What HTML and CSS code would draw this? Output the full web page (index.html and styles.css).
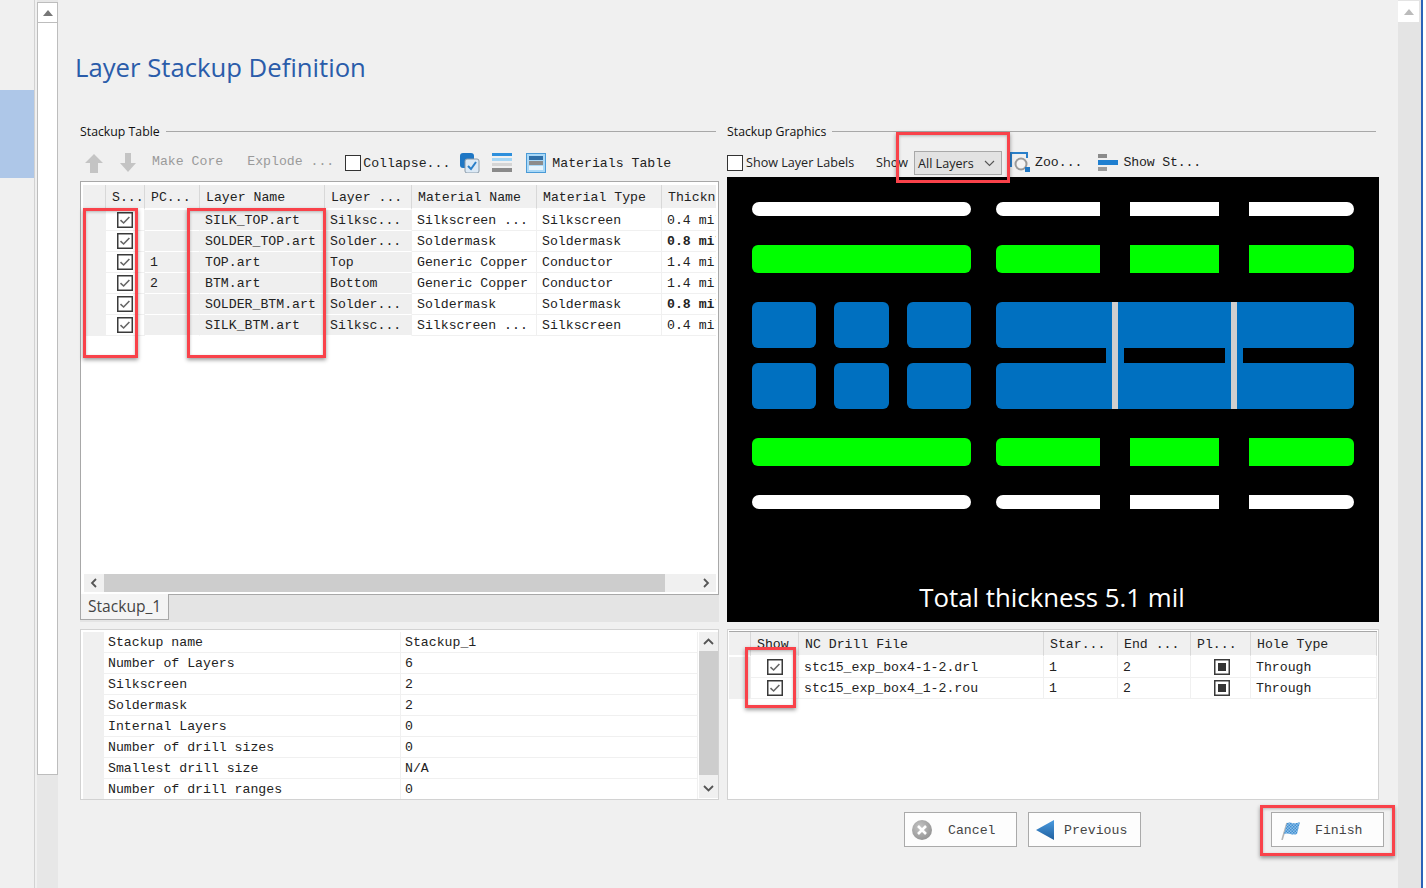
FILE: index.html
```html
<!DOCTYPE html>
<html lang="en">
<head>
    <meta charset="UTF-8" />
    <title>Layer Stackup Definition</title>
    <link rel="stylesheet" href="styles.css">
</head>
<body>
    <svg class="defs" width="0" height="0">
        <defs>
            <pattern id="flag-check" width="3" height="3" patternUnits="userSpaceOnUse">
                <rect width="3" height="3" fill="#8fc0e8"/>
                <rect width="1.5" height="1.5" fill="#3f8fd2"/>
                <rect x="1.5" y="1.5" width="1.5" height="1.5" fill="#3f8fd2"/>
            </pattern>
            <linearGradient id="prev-fill" x1="0" y1="0" x2="0" y2="1">
                <stop offset="0" stop-color="#4a9be0"/>
                <stop offset="1" stop-color="#1f5f9e"/>
            </linearGradient>
            <radialGradient id="cancel-fill" cx="0.4" cy="0.35" r="0.8">
                <stop offset="0" stop-color="#c4c4c4"/>
                <stop offset="1" stop-color="#8c8c8c"/>
            </radialGradient>
        </defs>
        <symbol id="tick" viewBox="0 0 16 16">
            <rect x="0.75" y="0.75" width="14.5" height="14.5" fill="#fff" stroke="#3a3a3a" stroke-width="1.5"/>
            <path d="M3.5 8.2 L6.6 11 L12.4 5" fill="none" stroke="#666" stroke-width="1.6"/>
        </symbol>
        <symbol id="plated" viewBox="0 0 16 16">
            <rect x="0.75" y="0.75" width="14.5" height="14.5" fill="#fff" stroke="#3a3a3a" stroke-width="1.5"/>
            <rect x="4" y="4" width="8" height="8" fill="#333"/>
        </symbol>
    </svg>

    <div class="sidebar"><div class="sidebar-active"></div></div>

    <div class="vscroll vscroll-left">
        <div class="vscroll-btn"><span class="tri-up"></span></div>
        <div class="vscroll-thumb"></div>
    </div>

    <div class="content">
        <h1 class="title">Layer Stackup Definition</h1>

        <div class="top-row">
            <!-- Stackup table -->
            <div class="panel">
                <div class="group-label"><span>Stackup Table</span></div>
                <div class="toolbar toolbar-left">
                    <svg class="arrow-icon" width="20" height="22" viewBox="0 0 20 22"><path d="M10 2 L19 11 H14 V21 H6 V11 H1 Z" fill="#c4c4c4"/></svg>
                    <svg class="arrow-icon arrow-down" width="18" height="22" viewBox="0 0 18 22"><path d="M6 1 H12 V11 H17 L9 20 L1 11 H6 Z" fill="#c4c4c4"/></svg>
                    <span class="mono muted make-core">Make Core</span>
                    <span class="mono muted explode">Explode ...</span>
                    <span class="box"></span>
                    <span class="mono collapse">Collapse...</span>
                    <svg class="tool-icon icon-copy" width="20" height="20" viewBox="0 0 20 20">
                        <rect x="0" y="0" width="14" height="15" rx="3" fill="#1f77c4"/>
                        <rect x="5" y="6" width="14" height="14" rx="2" fill="#dce9f5" stroke="#8a9aa8"/>
                        <path d="M8 13 L11 16 L16 9" fill="none" stroke="#2a7fc9" stroke-width="2"/>
                    </svg>
                    <svg class="tool-icon icon-layers" width="20" height="20" viewBox="0 0 20 20">
                        <rect y="0" width="20" height="3" fill="#2d8fdc"/>
                        <rect y="5" width="20" height="3" fill="#a5d6f5"/>
                        <rect y="10" width="20" height="3" fill="#d5d5d5"/>
                        <rect y="15" width="20" height="4" fill="#8a8a8a"/>
                    </svg>
                    <svg class="tool-icon icon-materials" width="20" height="20" viewBox="0 0 20 20">
                        <rect x="0.5" y="0.5" width="19" height="19" fill="#a9d8f7" stroke="#4a9ad6"/>
                        <rect x="3" y="3" width="14" height="4" fill="#2f6fa8"/>
                        <rect x="3" y="8" width="14" height="4" fill="#8c8c8c"/>
                        <rect x="3" y="13" width="14" height="4" fill="#e8f4fc"/>
                    </svg>
                    <span class="mono materials">Materials Table</span>
                </div>

                <div class="layer-box">
                    <div class="layer-scroll">
                        <table class="grid layer-grid">
                            <colgroup>
                                <col class="c-gutter"><col class="c-show"><col class="c-pc"><col class="c-name"><col class="c-layer"><col class="c-mat"><col class="c-type"><col class="c-thick">
                            </colgroup>
                            <thead>
                                <tr><th></th><th>S...</th><th>PC...</th><th>Layer Name</th><th>Layer ...</th><th>Material Name</th><th>Material Type</th><th>Thickn</th></tr>
                            </thead>
                            <tbody>
                                <tr><td class="gutter"></td><td class="chk"><svg class="check"><use href="#tick"/></svg></td><td class="grey"></td><td class="grey">SILK_TOP.art</td><td class="grey">Silksc...</td><td>Silkscreen ...</td><td>Silkscreen</td><td>0.4 mil</td></tr>
                                <tr><td class="gutter"></td><td class="chk"><svg class="check"><use href="#tick"/></svg></td><td class="grey"></td><td class="grey">SOLDER_TOP.art</td><td class="grey">Solder...</td><td>Soldermask</td><td>Soldermask</td><td class="strong">0.8 mil</td></tr>
                                <tr><td class="gutter"></td><td class="chk"><svg class="check"><use href="#tick"/></svg></td><td class="grey">1</td><td class="grey">TOP.art</td><td class="grey">Top</td><td>Generic Copper</td><td>Conductor</td><td>1.4 mil</td></tr>
                                <tr><td class="gutter"></td><td class="chk"><svg class="check"><use href="#tick"/></svg></td><td class="grey">2</td><td class="grey">BTM.art</td><td class="grey">Bottom</td><td>Generic Copper</td><td>Conductor</td><td>1.4 mil</td></tr>
                                <tr><td class="gutter"></td><td class="chk"><svg class="check"><use href="#tick"/></svg></td><td class="grey"></td><td class="grey">SOLDER_BTM.art</td><td class="grey">Solder...</td><td>Soldermask</td><td>Soldermask</td><td class="strong">0.8 mil</td></tr>
                                <tr><td class="gutter"></td><td class="chk"><svg class="check"><use href="#tick"/></svg></td><td class="grey"></td><td class="grey">SILK_BTM.art</td><td class="grey">Silksc...</td><td>Silkscreen ...</td><td>Silkscreen</td><td>0.4 mil</td></tr>
                            </tbody>
                        </table>
                    </div>
                    <div class="hscroll">
                        <svg class="chev" width="20" height="18" viewBox="0 0 20 18"><path d="M12 5 L8 9 L12 13" fill="none" stroke="#555" stroke-width="1.8"/></svg>
                        <div class="hscroll-track"><div class="hscroll-thumb"></div></div>
                        <svg class="chev" width="20" height="18" viewBox="0 0 20 18"><path d="M8 5 L12 9 L8 13" fill="none" stroke="#555" stroke-width="1.8"/></svg>
                    </div>
                </div>
                <div class="tabs"><div class="tab">Stackup_1</div></div>
            </div>

            <!-- Stackup graphics -->
            <div class="panel">
                <div class="group-label"><span>Stackup Graphics</span></div>
                <div class="toolbar toolbar-right">
                    <span class="box"></span>
                    <span class="sans labels">Show Layer Labels</span>
                    <span class="sans show">Show</span>
                    <div class="select">
                        <span class="sans">All Layers</span>
                        <svg width="11" height="7" viewBox="0 0 11 7"><path d="M1 1 L5.5 5.5 L10 1" fill="none" stroke="#555" stroke-width="1.1"/></svg>
                    </div>
                    <svg class="tool-icon icon-zoom" width="20" height="20" viewBox="0 0 20 20">
                        <path d="M1 15 V1 H17 V6" fill="none" stroke="#2a7fc9" stroke-width="2"/>
                        <circle cx="11" cy="12" r="5.5" fill="#f4f4f4" stroke="#9a9a9a" stroke-width="2"/>
                        <rect x="15" y="15" width="5" height="5" fill="#1f77c4"/>
                    </svg>
                    <span class="mono zoom-label">Zoo...</span>
                    <svg class="tool-icon icon-stack" width="20" height="20" viewBox="0 0 20 20">
                        <rect x="0" y="1" width="9" height="4" fill="#8a8a8a"/>
                        <rect x="0" y="7" width="20" height="5" fill="#1f7fd0"/>
                        <rect x="0" y="14" width="9" height="4" fill="#9a9a9a"/>
                    </svg>
                    <span class="mono show-stack">Show St...</span>
                </div>

                <svg class="graphic" width="652" height="445" viewBox="0 0 652 445">
                    <rect width="652" height="445" fill="#000"/>
                    <g fill="#fff">
                        <rect x="25" y="25" width="219" height="14" rx="7"/>
                        <path d="M276 25 H373 V39 H276 A7 7 0 0 1 276 25 Z"/>
                        <rect x="403" y="25" width="89" height="14"/>
                        <path d="M522 25 H620 A7 7 0 0 1 620 39 H522 Z"/>
                        <rect x="25" y="318" width="219" height="14" rx="7"/>
                        <path d="M276 318 H373 V332 H276 A7 7 0 0 1 276 318 Z"/>
                        <rect x="403" y="318" width="89" height="14"/>
                        <path d="M522 318 H620 A7 7 0 0 1 620 332 H522 Z"/>
                    </g>
                    <g fill="#00ff00">
                        <rect x="25" y="68" width="219" height="28" rx="6"/>
                        <path d="M275 68 H373 V96 H275 A6 6 0 0 1 269 90 V74 A6 6 0 0 1 275 68 Z"/>
                        <rect x="403" y="68" width="89" height="28"/>
                        <path d="M522 68 H621 A6 6 0 0 1 627 74 V90 A6 6 0 0 1 621 96 H522 Z"/>
                        <rect x="25" y="261" width="219" height="28" rx="6"/>
                        <path d="M275 261 H373 V289 H275 A6 6 0 0 1 269 283 V267 A6 6 0 0 1 275 261 Z"/>
                        <rect x="403" y="261" width="89" height="28"/>
                        <path d="M522 261 H621 A6 6 0 0 1 627 267 V283 A6 6 0 0 1 621 289 H522 Z"/>
                    </g>
                    <g fill="#0070c0">
                        <rect x="25" y="125" width="64" height="46" rx="6"/>
                        <rect x="107" y="125" width="55" height="46" rx="6"/>
                        <rect x="180" y="125" width="64" height="46" rx="6"/>
                        <rect x="25" y="186" width="64" height="46" rx="6"/>
                        <rect x="107" y="186" width="55" height="46" rx="6"/>
                        <rect x="180" y="186" width="64" height="46" rx="6"/>
                        <rect x="269" y="125" width="358" height="46" rx="6"/>
                        <rect x="269" y="186" width="358" height="46" rx="6"/>
                        <rect x="379" y="165" width="18" height="27"/>
                        <rect x="498" y="165" width="18" height="27"/>
                    </g>
                    <g fill="#cfcfcf">
                        <rect x="385" y="125" width="6" height="107"/>
                        <rect x="504" y="125" width="6" height="107"/>
                    </g>
                    <text class="total" x="325" y="430" text-anchor="middle">Total thickness 5.1 mil</text>
                </svg>
            </div>
        </div>

        <div class="bottom-row">
            <!-- Stackup summary -->
            <div class="summary">
                <table class="grid info-grid">
                    <colgroup><col class="i-gutter"><col class="i-key"><col></colgroup>
                    <tbody>
                        <tr><td class="gutter"></td><td>Stackup name</td><td>Stackup_1</td></tr>
                        <tr><td class="gutter"></td><td>Number of Layers</td><td>6</td></tr>
                        <tr><td class="gutter"></td><td>Silkscreen</td><td>2</td></tr>
                        <tr><td class="gutter"></td><td>Soldermask</td><td>2</td></tr>
                        <tr><td class="gutter"></td><td>Internal Layers</td><td>0</td></tr>
                        <tr><td class="gutter"></td><td>Number of drill sizes</td><td>0</td></tr>
                        <tr><td class="gutter"></td><td>Smallest drill size</td><td>N/A</td></tr>
                        <tr><td class="gutter"></td><td>Number of drill ranges</td><td>0</td></tr>
                    </tbody>
                </table>
                <div class="info-scroll">
                    <svg width="19" height="19" viewBox="0 0 19 19"><path d="M5 12 L9.5 7.5 L14 12" fill="none" stroke="#555" stroke-width="1.8"/></svg>
                    <div class="info-thumb"></div>
                    <svg width="19" height="19" viewBox="0 0 19 19"><path d="M5 7 L9.5 11.5 L14 7" fill="none" stroke="#555" stroke-width="1.8"/></svg>
                </div>
            </div>

            <!-- Drill files -->
            <div class="drill">
                <table class="grid drill-grid">
                    <colgroup>
                        <col class="d-gutter"><col class="d-show"><col class="d-file"><col class="d-start"><col class="d-end"><col class="d-plated"><col>
                    </colgroup>
                    <thead>
                        <tr><th></th><th class="th-show">Show</th><th>NC Drill File</th><th>Star...</th><th>End ...</th><th>Pl...</th><th>Hole Type</th></tr>
                    </thead>
                    <tbody>
                        <tr><td class="gutter"></td><td class="chk"><svg class="check"><use href="#tick"/></svg></td><td>stc15_exp_box4-1-2.drl</td><td>1</td><td>2</td><td class="chk plate"><svg class="check"><use href="#plated"/></svg></td><td>Through</td></tr>
                        <tr><td class="gutter"></td><td class="chk"><svg class="check"><use href="#tick"/></svg></td><td>stc15_exp_box4_1-2.rou</td><td>1</td><td>2</td><td class="chk plate"><svg class="check"><use href="#plated"/></svg></td><td>Through</td></tr>
                    </tbody>
                </table>
            </div>
        </div>

        <div class="footer">
            <button class="btn">
                <svg width="20" height="20" viewBox="0 0 20 20">
                    <circle cx="10" cy="10" r="10" fill="url(#cancel-fill)"/>
                    <path d="M6 6 L14 14 M14 6 L6 14" stroke="#fff" stroke-width="2.6"/>
                </svg>
                <span class="btn-text cancel-text">Cancel</span>
            </button>
            <button class="btn">
                <svg width="19" height="20" viewBox="0 0 19 20"><path d="M18 0 V20 L0 10 Z" fill="url(#prev-fill)"/></svg>
                <span class="btn-text prev-text">Previous</span>
            </button>
            <button class="btn btn-finish">
                <svg width="20" height="20" viewBox="0 0 20 20">
                    <path d="M1 20 L6 3" stroke="#b5b5b5" stroke-width="1.6"/>
                    <path d="M6 3 C10 1 12 5 19 2 L16 14 C10 16 8 12 3 14 Z" fill="url(#flag-check)"/>
                </svg>
                <span class="btn-text finish-text">Finish</span>
            </button>
        </div>
    </div>

    <div class="vscroll vscroll-right">
        <div class="vscroll-btn"><span class="tri-up"></span></div>
    </div>
    <div class="edge"></div>

    <!-- Red callouts drawn over the screenshot -->
    <div class="callout callout-show"></div>
    <div class="callout callout-name"></div>
    <div class="callout callout-select"></div>
    <div class="callout callout-drill"></div>
    <div class="callout callout-finish"></div>
</body>
</html>
```

FILE: styles.css
```css
* {
    box-sizing: border-box;
}

html, body {
    height: 888px;
    overflow: hidden;
}

body {
    margin: 0;
    position: relative;
    display: flex;
    background-color: #f0f0f0;
    font-family: "Liberation Mono", monospace;
    font-size: 13.2px;
    color: #222;
}

.defs {
    position: absolute;
}

.mono {
    font-family: "Liberation Mono", monospace;
    font-size: 13.2px;
    white-space: nowrap;
}

.sans {
    font-family: "Open Sans", "Noto Sans", sans-serif;
    font-size: 12.6px;
    white-space: nowrap;
}

.muted {
    color: #9a9a9a;
}

/* Left navigation strip */
.sidebar {
    width: 35px;
    flex: none;
    padding-top: 90px;
    border-right: 1px solid #d2d2d2;
}

.sidebar-active {
    width: 34px;
    height: 88px;
    background-color: #aec7e8;
}

/* Page scrollbars */
.vscroll {
    width: 21px;
    flex: none;
    display: flex;
    flex-direction: column;
    background-color: #e7e7e7;
}

.vscroll-left {
    margin-left: 2px;
    padding-top: 2px;
}

.vscroll-right {
    width: 23px;
    padding: 1px 2px 0 0;
    background-color: #e4e4e4;
}

.vscroll-btn {
    height: 21px;
    flex: none;
    display: flex;
    align-items: center;
    justify-content: center;
    background-color: #fff;
    border: 1px solid #bdbdbd;
}

.vscroll-right .vscroll-btn {
    border: none;
}

.tri-up {
    width: 0;
    height: 0;
    border-left: 5px solid transparent;
    border-right: 5px solid transparent;
    border-bottom: 6px solid #777;
}

.vscroll-right .tri-up {
    border-bottom-color: #bbb;
}

.vscroll-thumb {
    height: 752px;
    background-color: #fff;
    border: 1px solid #bdbdbd;
    border-top: none;
}

.edge {
    width: 5px;
    flex: none;
    background-color: #fff;
    border-left: 2px solid #2b62b8;
}

/* Main content */
.content {
    width: 1340px;
    flex: none;
    padding: 0 19px 0 22px;
}

.title {
    margin: 0;
    height: 122px;
    padding: 48px 0 0;
    font-family: "Open Sans", "Noto Sans", sans-serif;
    font-size: 25.7px;
    font-weight: 400;
    line-height: 40px;
    color: #2a5caa;
    text-indent: -5px;
}

.top-row {
    display: grid;
    grid-template-columns: 639px 652px;
    column-gap: 8px;
    height: 500px;
}

.panel {
    display: flex;
    flex-direction: column;
    min-width: 0;
}

.group-label {
    height: 18px;
    display: flex;
    align-items: center;
    gap: 6px;
    font-family: "Open Sans", "Noto Sans", sans-serif;
    font-size: 12.3px;
    color: #111;
}

.group-label::after {
    content: "";
    flex: 1;
    height: 1px;
    background-color: #a8a8a8;
    margin-right: 3px;
}

.toolbar {
    height: 28px;
    flex: none;
    display: flex;
    align-items: center;
}

.toolbar-left {
    margin-top: 9px;
    padding-left: 4px;
}

.toolbar-right {
    margin-top: 9px;
}

.box {
    width: 16px;
    height: 16px;
    flex: none;
    background-color: #fff;
    border: 1px solid #333;
}

.arrow-down {
    margin-left: 15px;
}

.make-core {
    margin-left: 15px;
    margin-bottom: 3px;
}

.explode {
    margin-left: 24px;
    margin-bottom: 3px;
}

.toolbar-left .box {
    margin-left: 11px;
}

.collapse {
    margin-left: 2px;
}

.icon-copy {
    margin-left: 10px;
}

.icon-layers {
    margin-left: 12px;
}

.icon-materials {
    margin-left: 14px;
}

.materials {
    margin-left: 6px;
}

.labels {
    margin-left: 3px;
    width: 108px;
    margin-bottom: 1px;
}

.show {
    margin-left: 22px;
    width: 38px;
    margin-bottom: 1px;
}

.select {
    width: 88px;
    height: 24px;
    flex: none;
    display: flex;
    align-items: center;
    justify-content: space-between;
    padding: 0 6px 0 3px;
    background-color: #e2e2e2;
    border: 1px solid #a8a8a8;
}

.icon-zoom {
    margin-left: 8px;
    margin-bottom: 2px;
}

.zoom-label {
    margin-left: 5px;
    margin-bottom: 2px;
}

.icon-stack {
    margin-left: 16px;
}

.show-stack {
    margin-left: 5px;
    margin-bottom: 2px;
    letter-spacing: -0.15px;
}

/* Layer table */
.layer-box {
    margin-top: 4px;
    flex: 1;
    min-height: 0;
    display: flex;
    flex-direction: column;
    padding: 3px 2px 2px;
    background-color: #fff;
    border: 1px solid #a8a8a8;
    border-bottom: none;
}

.layer-scroll {
    flex: 1;
    min-height: 0;
    overflow: hidden;
}

.grid {
    table-layout: fixed;
    border-collapse: separate;
    border-spacing: 0;
    font-size: 13.2px;
}

.grid th {
    height: 25px;
    padding: 2px 0 0 6px;
    text-align: left;
    font-weight: 400;
    white-space: nowrap;
    overflow: hidden;
    background-color: #f0f0f0;
    border-right: 1px solid #d8d8d8;
    border-bottom: 2px solid #fff;
}

.grid td {
    height: 21px;
    padding: 0 0 0 5px;
    white-space: nowrap;
    overflow: hidden;
    border-right: 1px solid #f0f0f0;
    border-bottom: 1px solid #f0f0f0;
}

.grid td.gutter {
    background-color: #f0f0f0;
    border-right: none;
    border-bottom: 1px solid #f0f0f0;
}

.grid td.grey {
    background-color: #efefef;
    border-right: 1px solid #efefef;
    border-bottom: 1px solid #fff;
}

.grid td.chk {
    padding: 0;
    text-align: center;
}

.grid td.plate {
    padding-left: 2px;
}

.grid td.strong {
    font-weight: 700;
}

.check {
    display: block;
    width: 16px;
    height: 16px;
    margin: 0 auto;
}

.layer-grid {
    width: 635px;
}

.c-gutter { width: 23px; }
.c-show { width: 39px; }
.c-pc { width: 55px; }
.c-name { width: 125px; }
.c-layer { width: 87px; }
.c-mat { width: 125px; }
.c-type { width: 125px; }
.c-thick { width: 56px; }

.hscroll {
    height: 18px;
    flex: none;
    display: flex;
    align-items: center;
    background-color: #f0f0f0;
    margin-left: 1px;
}

.chev {
    flex: none;
}

.hscroll-track {
    flex: 1;
    height: 18px;
}

.hscroll-thumb {
    width: 561px;
    height: 18px;
    background-color: #cdcdcd;
}

.tabs {
    height: 28px;
    flex: none;
    background-color: #e4e4e4;
    border-top: 1px solid #a8a8a8;
}

.tab {
    width: 89px;
    height: 26px;
    margin-top: -1px;
    padding-left: 7px;
    font-family: "Open Sans", "Noto Sans", sans-serif;
    font-size: 15.6px;
    line-height: 25px;
    color: #444;
    background-color: #f4f4f4;
    border: 1px solid #a8a8a8;
    border-top: none;
}

.graphic {
    display: block;
    flex: none;
}

.total {
    font-family: "Open Sans", "Noto Sans", sans-serif;
    font-size: 25.8px;
    fill: #fff;
}

/* Lower tables */
.bottom-row {
    display: grid;
    grid-template-columns: 639px 652px;
    column-gap: 8px;
    height: 171px;
    margin-top: 7px;
}

.summary {
    display: flex;
    padding: 2px 1px 1px 2px;
    overflow: hidden;
    background-color: #fff;
    border: 1px solid #d2d2d2;
}

.info-grid {
    width: 615px;
    flex: none;
    align-self: flex-start;
}

.i-gutter { width: 21px; }
.i-key { width: 297px; }

.grid.info-grid td {
    padding-left: 4px;
}

.info-scroll {
    width: 19px;
    flex: none;
    display: flex;
    flex-direction: column;
    margin-left: 1px;
    background-color: #f0f0f0;
}

.info-thumb {
    height: 124px;
    margin: 0 0 4px;
    background-color: #cdcdcd;
}

.drill {
    padding: 1px 1px 0;
    overflow: hidden;
    background-color: #fff;
    border: 1px solid #d2d2d2;
}

.drill-grid {
    width: 648px;
    border-top: 1px solid #a8a8a8;
}

.drill-grid th {
    height: 25px;
}

.th-show {
    text-align: right;
}

.d-gutter { width: 22px; }
.d-show { width: 48px; }
.d-file { width: 245px; }
.d-start { width: 74px; }
.d-end { width: 73px; }
.d-plated { width: 60px; }

/* Buttons */
.footer {
    height: 35px;
    margin-top: 12px;
    display: flex;
    margin-right: -5px;
    padding-left: 824px;
}

.btn {
    width: 113px;
    height: 35px;
    flex: none;
    display: flex;
    align-items: center;
    padding: 0 0 0 7px;
    margin-right: 11px;
    background-color: #fdfdfd;
    border: 1px solid #aaa;
    font-family: "Liberation Mono", monospace;
    font-size: 13.2px;
    color: #444;
}

.btn-finish {
    margin: 0 0 0 119px;
    padding-left: 9px;
}

.btn-text {
    margin-top: 2px;
}

.cancel-text { margin-left: 16px; }
.prev-text { margin-left: 9px; }
.finish-text { margin-left: 14px; }

/* Red callouts */
.callout {
    position: absolute;
    border: 3px solid #f9424a;
    box-shadow: 0 2px 4px rgba(0, 0, 0, 0.4), inset 0 1px 3px rgba(0, 0, 0, 0.25);
    pointer-events: none;
}

.callout-show { left: 83px; top: 208px; width: 55px; height: 150px; }
.callout-name { left: 187px; top: 208px; width: 139px; height: 150px; }
.callout-select { left: 896px; top: 132px; width: 114px; height: 51px; }
.callout-drill { left: 745px; top: 647px; width: 51px; height: 61px; }
.callout-finish { left: 1260px; top: 805px; width: 135px; height: 51px; }
```
